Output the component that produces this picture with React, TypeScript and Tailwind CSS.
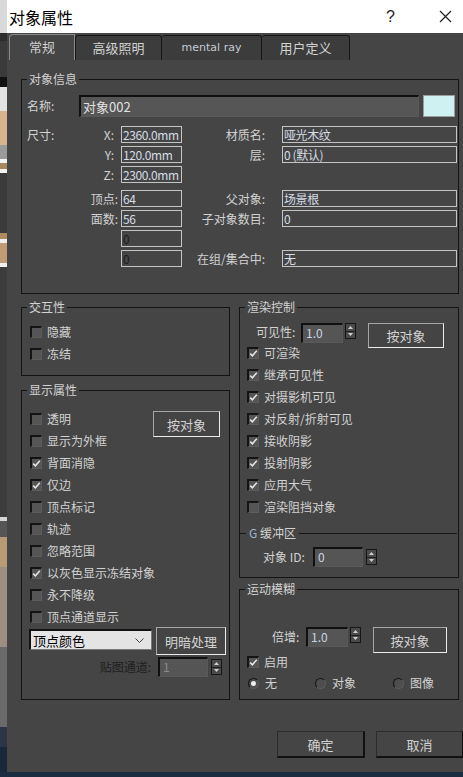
import React from "react";

const TXT = "text-[#d2d2d2]";

function Check({ on }: { on?: boolean }) {
  return (
    <span className="flex h-[12px] w-[12px] shrink-0 items-center justify-center border-b border-l-2 border-r border-t-2 border-b-[#5c5c5c] border-l-[#141414] border-r-[#5c5c5c] border-t-[#141414] bg-[#555555]">
      {on && (
        <svg width="9" height="9" viewBox="0 0 9 9">
          <path d="M1.2 4.6 L3.4 6.8 L7.8 1.8" fill="none" stroke="#e8e8e8" strokeWidth="1.5" />
        </svg>
      )}
    </span>
  );
}

function CheckRow({ label, on }: { label: string; on?: boolean }) {
  return (
    <div className="flex h-[22px] items-center gap-[5px] whitespace-nowrap">
      <Check on={on} />
      <span className={TXT}>{label}</span>
    </div>
  );
}

function Radio({ label, on, w }: { label: string; on?: boolean; w: string }) {
  return (
    <div className={`flex items-center gap-[6px] ${w}`}>
      <span className="flex h-[11px] w-[11px] items-center justify-center rounded-full border border-b-[#5a5a5a] border-l-[#121212] border-r-[#5a5a5a] border-t-[#121212] bg-[#4e4e4e]">
        {on && <span className="h-[5px] w-[5px] rounded-full bg-[#f0f0f0]" />}
      </span>
      <span className={TXT}>{label}</span>
    </div>
  );
}

function Spin() {
  return (
    <div className="flex h-[16px] w-[11px] flex-col border border-[#161616] bg-[#4a4a4a]">
      <div className="flex flex-1 items-center justify-center border-b border-[#1e1e1e]">
        <svg width="5" height="3" viewBox="0 0 5 3">
          <path d="M0 3 L2.5 0 L5 3 Z" fill="#cfcfcf" />
        </svg>
      </div>
      <div className="flex flex-1 items-center justify-center">
        <svg width="5" height="3" viewBox="0 0 5 3">
          <path d="M0 0 L2.5 3 L5 0 Z" fill="#cfcfcf" />
        </svg>
      </div>
    </div>
  );
}

function Edit({ value, w, dim }: { value: string; w: string; dim?: boolean }) {
  return (
    <div
      className={`h-[20px] ${w} border-b border-l-2 border-r border-t-2 border-b-[#595959] border-l-[#101010] border-r-[#595959] border-t-[#101010] bg-[#555555] pl-[3px] leading-[16px] ${
        dim ? "text-[#8a8a8a]" : "text-[#c9d6e4]"
      }`}
    >
      {value}
    </div>
  );
}

function Btn({ label, cls }: { label: string; cls: string }) {
  return (
    <div
      className={`flex shrink-0 items-center justify-center border border-b-[#ececec] border-l-[#a6a6a6] border-r-[#ececec] border-t-[#a6a6a6] bg-[#444444] text-[13px] ${TXT} ${cls}`}
    >
      {label}
    </div>
  );
}

function Field({ value, w, dark }: { value: string; w: string; dark?: boolean }) {
  return (
    <div
      className={`h-[17px] ${w} shrink-0 overflow-hidden whitespace-nowrap border border-[#c4c4c4] pl-[1px] leading-[15px] tracking-[-0.4px] ${
        dark ? "text-[#1c1c1c]" : "text-[#d6dde6]"
      }`}
    >
      {value}
    </div>
  );
}

function Group({ title, cls, children }: { title: string; cls: string; children: React.ReactNode }) {
  return (
    <div className={`relative border border-[#141414] ${cls}`}>
      <span className={`absolute -top-[9px] left-[5px] bg-[#454545] px-[2px] leading-[16px] ${TXT}`}>{title}</span>
      {children}
    </div>
  );
}

function DimRow({
  lead,
  axis,
  axisPad,
  left,
  leftDark,
  rlabel,
  right,
  mt,
}: {
  lead?: string;
  axis?: string;
  axisPad: string;
  left: string;
  leftDark?: boolean;
  rlabel?: string;
  right?: string;
  mt: string;
}) {
  return (
    <div className={`flex h-[17px] items-center ${mt}`}>
      <div className="flex w-[99px] items-center justify-between pl-[5px]">
        <span className={TXT}>{lead ?? ""}</span>
        <span className={`${TXT} ${axisPad}`}>{axis ?? ""}</span>
      </div>
      <Field value={left} w="w-[61px]" dark={leftDark} />
      <div className={`w-[85px] pr-[2px] text-right ${TXT}`}>{rlabel ?? ""}</div>
      <div className="w-[15px]" />
      {right !== undefined && <Field value={right} w="w-[175px]" />}
    </div>
  );
}

export default function App() {
  const strip = [
    ["h-[33px]", "bg-[#d9d9d9]"],
    ["h-[8px]", "bg-[#2c2c2c]"],
    ["h-[36px]", "bg-[#3a3a3a]"],
    ["h-[10px]", "bg-[#111111]"],
    ["h-[24px]", "bg-[#e2e2e2]"],
    ["h-[34px]", "bg-[#d8b48c]"],
    ["h-[14px]", "bg-[#9a9a9a]"],
    ["h-[4px]", "bg-[#f2f2f2]"],
    ["h-[6px]", "bg-[#a8865e]"],
    ["h-[4px]", "bg-[#f2f2f2]"],
    ["h-[60px]", "bg-[#3a3a3a]"],
    ["h-[6px]", "bg-[#b08a62]"],
    ["h-[4px]", "bg-[#eeeeee]"],
    ["h-[20px]", "bg-[#c09c74]"],
    ["h-[4px]", "bg-[#f0f0f0]"],
    ["h-[250px]", "bg-[#3c3c3c]"],
    ["h-[4px]", "bg-[#d6d6d6]"],
    ["h-[16px]", "bg-[#555555]"],
    ["h-[30px]", "bg-[#b89a74]"],
    ["h-[80px]", "bg-[#9c8e80]"],
    ["h-[80px]", "bg-[#6a6a6a]"],
    ["h-[20px]", "bg-[#2a3646]"],
  ];

  return (
    <div className="flex h-[777px] w-[463px] flex-col overflow-hidden bg-[#18283b] font-['Noto_Sans_CJK_SC','Liberation_Sans',sans-serif] text-[12px] leading-none">
      <div className="flex h-[772px] shrink-0">
        <div className="flex w-[7px] shrink-0 flex-col overflow-hidden">
          {strip.map(([h, c], i) => (
            <div key={i} className={`${h} ${c} shrink-0`} />
          ))}
        </div>

        <div className="flex w-[456px] shrink-0 flex-col bg-[#454545]">
          {/* title bar */}
          <div className="flex h-[33px] shrink-0 items-center bg-white pl-[2px] pr-[11px]">
            <span className="text-[16px] text-black">对象属性</span>
            <span className="ml-auto mr-[44px] font-['Liberation_Sans',sans-serif] text-[16px] text-[#222222]">?</span>
            <svg width="13" height="13" viewBox="0 0 13 13">
              <path d="M1 1 L12 12 M12 1 L1 12" stroke="#222222" strokeWidth="1.2" />
            </svg>
          </div>

          {/* tabs */}
          <div className="flex h-[27px] shrink-0 items-end pl-[2px]">
            <div className={`flex h-[26px] w-[66px] items-center justify-center rounded-tl-[4px] border-l border-r border-t border-[#8a8a8a] bg-[#454545] pb-[2px] text-[13px] ${TXT}`}>
              常规
            </div>
            <div className={`flex h-[25px] w-[87px] items-center justify-center rounded-t-[3px] border border-b-0 border-[#161616] bg-[#3c3c3c] pb-[2px] text-[13px] ${TXT}`}>
              高级照明
            </div>
            <div className="flex h-[25px] w-[100px] items-center justify-center rounded-t-[3px] border border-b-0 border-l-0 border-[#161616] bg-[#3c3c3c] pb-[2px] font-['DejaVu_Sans',sans-serif] text-[11px] text-[#c4cbd4]">
              mental ray
            </div>
            <div className={`flex h-[25px] w-[88px] items-center justify-center rounded-t-[3px] border border-b-0 border-l-0 border-[#161616] bg-[#3c3c3c] pb-[2px] text-[13px] ${TXT}`}>
              用户定义
            </div>
          </div>

          {/* content */}
          <div className="flex flex-col pl-[14px] pt-[19px]">
            <Group title="对象信息" cls="h-[215px] w-[438px] pt-[15px]">
              <div className="flex h-[22px] items-center">
                <span className={`w-[57px] pl-[5px] ${TXT}`}>名称:</span>
                <div className="flex h-[22px] w-[340px] items-center border-b border-l-2 border-r border-t-2 border-b-[#5a5a5a] border-l-[#101010] border-r-[#5a5a5a] border-t-[#101010] bg-[#565656] pl-[2px] text-[13px] text-[#e2e2e2]">
                  对象002
                </div>
                <div className="ml-[4px] h-[22px] w-[32px] border border-[#9c9c9c] bg-[#cff1f1]" />
              </div>

              <DimRow lead="尺寸:" axis="X:" axisPad="pr-[7px]" left="2360.0mm" rlabel="材质名:" right="哑光木纹" mt="mt-[9px]" />
              <DimRow axis="Y:" axisPad="pr-[7px]" left="120.0mm" rlabel="层:" right="0 (默认)" mt="mt-[3px]" />
              <DimRow axis="Z:" axisPad="pr-[7px]" left="2300.0mm" mt="mt-[3px]" />
              <DimRow axis="顶点:" axisPad="pr-[3px]" left="64" rlabel="父对象:" right="场景根" mt="mt-[7px]" />
              <DimRow axis="面数:" axisPad="pr-[3px]" left="56" rlabel="子对象数目:" right="0" mt="mt-[3px]" />
              <DimRow axisPad="" left="0" leftDark mt="mt-[3px]" />
              <DimRow axisPad="" left="0" leftDark rlabel="在组/集合中:" right="无" mt="mt-[3px]" />
            </Group>

            <div className="mt-[13px] flex gap-[9px]">
              {/* left column */}
              <div className="flex w-[209px] flex-col">
                <Group title="交互性" cls="h-[69px] w-[209px] pl-[8px] pt-[13px]">
                  <CheckRow label="隐藏" />
                  <CheckRow label="冻结" />
                </Group>

                <Group title="显示属性" cls="mt-[14px] h-[310px] w-[209px] pt-[17px]">
                  <div className="flex pl-[8px]">
                    <div className="flex w-[123px] shrink-0 flex-col">
                      <CheckRow label="透明" />
                      <CheckRow label="显示为外框" />
                      <CheckRow label="背面消隐" on />
                      <CheckRow label="仅边" on />
                      <CheckRow label="顶点标记" />
                      <CheckRow label="轨迹" />
                      <CheckRow label="忽略范围" />
                      <CheckRow label="以灰色显示冻结对象" on />
                      <CheckRow label="永不降级" />
                      <CheckRow label="顶点通道显示" />
                    </div>
                    <Btn label="按对象" cls="mt-[3px] h-[26px] w-[67px]" />
                  </div>

                  <div className="flex h-[27px] items-start pl-[7px]">
                    <div className="mt-[1px] flex h-[21px] w-[123px] items-center border-b border-l-2 border-r border-t-2 border-b-[#7a7a7a] border-l-[#121212] border-r-[#7a7a7a] border-t-[#121212] bg-[#e4e4e4] pl-[2px] pr-[7px] text-[13px] text-black">
                      <span>顶点颜色</span>
                      <svg className="ml-auto" width="9" height="5" viewBox="0 0 9 5">
                        <path d="M0.5 0.5 L4.5 4.5 L8.5 0.5" fill="none" stroke="#444444" strokeWidth="1" />
                      </svg>
                    </div>
                    <Btn label="明暗处理" cls="ml-[4px] -mt-[1px] h-[28px] w-[70px] border-[#f0f0f0]" />
                  </div>

                  <div className="mt-[2px] flex h-[20px] items-center">
                    <span className="w-[130px] pr-[1px] text-right text-[#1e1e1e]">贴图通道:</span>
                    <div className="ml-[6px]">
                      <Edit value="1" w="w-[50px]" dim />
                    </div>
                    <div className="ml-[3px]">
                      <Spin />
                    </div>
                  </div>
                </Group>
              </div>

              {/* right column */}
              <div className="flex w-[220px] flex-col">
                <Group title="渲染控制" cls="h-[271px] w-[220px] pt-[15px]">
                  <div className="flex h-[19px] items-start pl-[16px]">
                    <span className={`mt-[3px] w-[45px] ${TXT}`}>可见性:</span>
                    <Edit value="1.0" w="w-[42px]" />
                    <div className="ml-[2px]">
                      <Spin />
                    </div>
                    <Btn label="按对象" cls="ml-[12px] h-[25px] w-[76px]" />
                  </div>
                  <div className="flex flex-col pl-[7px]">
                    <CheckRow label="可渲染" on />
                    <CheckRow label="继承可见性" on />
                    <CheckRow label="对摄影机可见" on />
                    <CheckRow label="对反射/折射可见" on />
                    <CheckRow label="接收阴影" on />
                    <CheckRow label="投射阴影" on />
                    <CheckRow label="应用大气" on />
                    <CheckRow label="渲染阻挡对象" />
                  </div>
                  <div className="mt-[4px] flex h-[22px] items-center">
                    <div className="h-px w-[6px] bg-[#161616]" />
                    <span className={`px-[3px] ${TXT}`}>
                      <span className="text-[#9fb4cc]">G</span> 缓冲区
                    </span>
                    <div className="mr-[1px] h-px flex-1 bg-[#161616]" />
                  </div>
                  <div className="mt-[3px] flex h-[20px] items-center pl-[23px]">
                    <span className={`w-[50px] ${TXT}`}>对象 ID:</span>
                    <Edit value="0" w="w-[50px]" />
                    <div className="ml-[3px]">
                      <Spin />
                    </div>
                  </div>
                </Group>

                <Group title="运动模糊" cls="mt-[11px] h-[111px] w-[220px] pt-[37px]">
                  <div className="flex h-[24px] items-start pl-[32px]">
                    <span className={`mt-[4px] w-[34px] ${TXT}`}>倍增:</span>
                    <Edit value="1.0" w="w-[42px]" />
                    <div className="ml-[2px]">
                      <Spin />
                    </div>
                    <Btn label="按对象" cls="ml-[12px] h-[26px] w-[74px]" />
                  </div>
                  <div className="pl-[7px]">
                    <CheckRow label="启用" on />
                  </div>
                  <div className="flex h-[20px] items-center pl-[8px]">
                    <Radio label="无" on w="w-[67px]" />
                    <Radio label="对象" w="w-[78px]" />
                    <Radio label="图像" w="w-[60px]" />
                  </div>
                </Group>
              </div>
            </div>
          </div>

          {/* footer buttons */}
          <div className="mt-[31px] flex gap-[11px] pl-[270px]">
            <div className={`flex h-[27px] w-[88px] shrink-0 items-center justify-center border-b-2 border-l border-r-2 border-t border-b-[#111111] border-l-[#2c2c2c] border-r-[#111111] border-t-[#2c2c2c] bg-[#454545] text-[13px] ${TXT}`}>
              确定
            </div>
            <div className={`flex h-[27px] w-[88px] shrink-0 items-center justify-center border-b-2 border-l border-r-2 border-t border-b-[#111111] border-l-[#2c2c2c] border-r-[#111111] border-t-[#2c2c2c] bg-[#454545] text-[13px] ${TXT}`}>
              取消
            </div>
          </div>
        </div>
      </div>
      <div className="h-[5px] shrink-0 bg-[#1c2c40]" />
    </div>
  );
}
